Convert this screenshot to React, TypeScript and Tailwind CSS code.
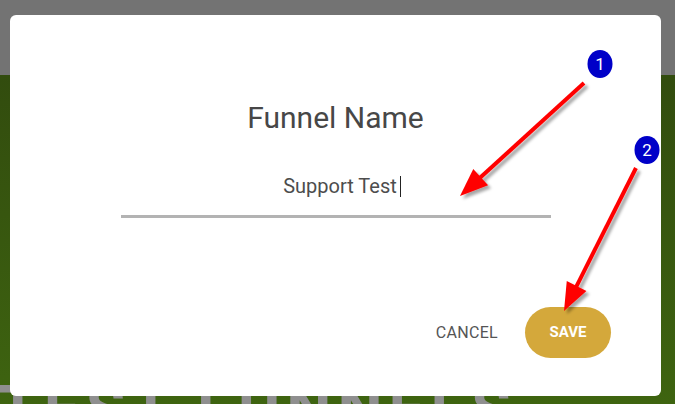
import React from "react"

function Arrow({ x1, y1, x2, y2 }: { x1: number; y1: number; x2: number; y2: number }) {
  const dx = x2 - x1
  const dy = y2 - y1
  const len = Math.sqrt(dx * dx + dy * dy)
  const ux = dx / len
  const uy = dy / len
  const head = 28
  const half = 11
  const bx = x2 - ux * head
  const by = y2 - uy * head
  const px = -uy
  const py = ux
  const pts = `${x2},${y2} ${bx + px * half},${by + py * half} ${bx - px * half},${by - py * half}`
  return (
    <g filter="url(#shadow)">
      <line x1={x1} y1={y1} x2={bx + ux * 2} y2={by + uy * 2} stroke="#ff0000" strokeWidth={4} />
      <polygon points={pts} fill="#ff0000" />
    </g>
  )
}

function Badge({ cx, cy, n }: { cx: number; cy: number; n: string }) {
  return (
    <g>
      <ellipse cx={cx} cy={cy} rx={12.5} ry={14} fill="#0000c8" />
      <text
        x={cx}
        y={cy + 6}
        textAnchor="middle"
        fill="#ffffff"
        fontSize="17"
        fontFamily="Roboto, 'Liberation Sans', sans-serif"
      >
        {n}
      </text>
    </g>
  )
}

export default function App() {
  return (
    <div className="relative w-[675px] h-[404px] overflow-hidden" style={{ fontFamily: "Roboto, 'Liberation Sans', sans-serif" }}>
      {/* page behind the overlay */}
      <div className="flex flex-col h-full">
        <div className="h-[75px] bg-[#737373]" />
        <div className="flex-1 bg-gradient-to-b from-[#324c0e] to-[#3e6410] flex flex-col justify-end overflow-hidden">
          <div className="text-[#8f8f8f] font-bold text-[64px] leading-none whitespace-nowrap tracking-[6px] -mb-[38px] -ml-[2px]">
            TEST FUNNELS
          </div>
        </div>
      </div>

      {/* dialog */}
      <div className="absolute left-[10px] top-[15px] w-[651px] h-[381px] bg-white rounded-[6px] flex flex-col items-center">
        <h2 className="mt-[87px] text-[30px] leading-8 text-[#474747]">Funnel Name</h2>
        <div className="mt-[40px] w-[430px] flex flex-col items-center">
          <div className="flex items-center text-[20px] leading-6 text-[#4d4d4d] pl-[13px]">
            <span>Support Test</span>
            <span className="ml-[3px] w-px h-[21px] bg-[#222]" />
          </div>
          <div className="mt-[17px] w-full h-[3px] bg-[#b3b3b3]" />
        </div>
        <div className="mt-auto mb-[38px] self-end mr-[50px] flex items-center gap-[27px]">
          <button className="text-[16px] text-[#555] tracking-[0.3px]">CANCEL</button>
          <button className="w-[86px] h-[51px] rounded-full bg-[#d4a83b] text-white font-bold text-[15px]">
            SAVE
          </button>
        </div>
      </div>

      {/* annotations */}
      <svg className="absolute inset-0 pointer-events-none" width={675} height={404}>
        <defs>
          <filter id="shadow" x="-20%" y="-20%" width="140%" height="140%">
            <feDropShadow dx="3" dy="3" stdDeviation="1.5" floodColor="#000" floodOpacity="0.35" />
          </filter>
        </defs>
        <Arrow x1={584} y1={83} x2={460} y2={196} />
        <Arrow x1={636} y1={168} x2={564} y2={311} />
        <Badge cx={600} cy={64} n="1" />
        <Badge cx={647} cy={150} n="2" />
      </svg>
    </div>
  )
}
